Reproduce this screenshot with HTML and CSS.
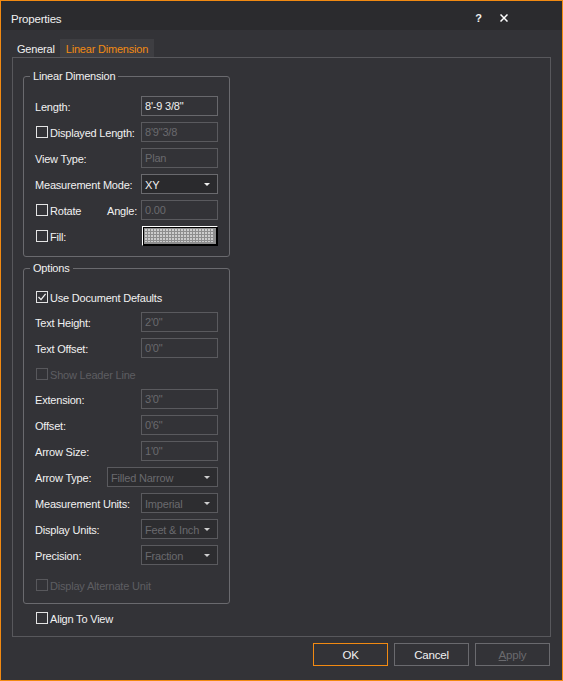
FILE: index.html
```html
<!DOCTYPE html>
<html>
<head>
<meta charset="utf-8">
<link rel="stylesheet" href="styles.css">
</head>
<body>
<div class="window">
  <div class="titlebar">
    <span class="title">Properties</span>
    <span class="tb-btn help">?</span>
    <span class="tb-btn close"><svg width="8" height="8" viewBox="0 0 8 8"><path d="M0.5 0.5 L7.5 7.5 M7.5 0.5 L0.5 7.5" stroke="#ffffff" stroke-width="1.5" fill="none"/></svg></span>
  </div>
  <div class="tabs">
    <span class="tab">General</span>
    <span class="tab active">Linear Dimension</span>
  </div>
  <div class="panel">
    <div class="group g1">
      <div class="legend">Linear Dimension</div>
      <div class="rows">
        <div class="row"><span class="label">Length:</span><span class="field input">8'-9 3/8"</span></div>
        <div class="row"><span class="cb"></span><span class="label">Displayed Length:</span><span class="field input disabled">8'9"3/8</span></div>
        <div class="row"><span class="label">View Type:</span><span class="field input disabled">Plan</span></div>
        <div class="row"><span class="label">Measurement Mode:</span><span class="field select"><span class="val">XY</span><span class="arrow"></span></span></div>
        <div class="row"><span class="cb"></span><span class="label">Rotate</span><span class="label right">Angle:</span><span class="field input disabled">0.00</span></div>
        <div class="row"><span class="cb"></span><span class="label">Fill:</span><span class="field swatch"><span class="grid"></span></span></div>
      </div>
    </div>
    <div class="group g2">
      <div class="legend">Options</div>
      <div class="rows">
        <div class="row short"><span class="cb checked"><svg width="10" height="10" viewBox="0 0 10 10"><path d="M1.5 5 L4 7.6 L8.6 1.8" stroke="#f1f1f1" stroke-width="1.3" fill="none"/></svg></span><span class="label">Use Document Defaults</span></div>
        <div class="row"><span class="label">Text Height:</span><span class="field input disabled">2'0"</span></div>
        <div class="row"><span class="label">Text Offset:</span><span class="field input disabled">0'0"</span></div>
        <div class="row short"><span class="cb off"></span><span class="label dim">Show Leader Line</span></div>
        <div class="row"><span class="label">Extension:</span><span class="field input disabled">3'0"</span></div>
        <div class="row"><span class="label">Offset:</span><span class="field input disabled">0'6"</span></div>
        <div class="row"><span class="label">Arrow Size:</span><span class="field input disabled">1'0"</span></div>
        <div class="row"><span class="label">Arrow Type:</span><span class="field select wide disabled"><span class="val">Filled Narrow</span><span class="arrow"></span></span></div>
        <div class="row"><span class="label">Measurement Units:</span><span class="field select disabled"><span class="val">Imperial</span><span class="arrow"></span></span></div>
        <div class="row"><span class="label">Display Units:</span><span class="field select disabled"><span class="val">Feet &amp; Inch</span><span class="arrow"></span></span></div>
        <div class="row"><span class="label">Precision:</span><span class="field select disabled"><span class="val">Fraction</span><span class="arrow"></span></span></div>
        <div class="row alt"><span class="cb off"></span><span class="label dim">Display Alternate Unit</span></div>
      </div>
    </div>
    <div class="row align"><span class="cb"></span><span class="label">Align To View</span></div>
  </div>
  <div class="buttons">
    <span class="btn default">OK</span>
    <span class="btn">Cancel</span>
    <span class="btn disabled"><u>A</u>pply</span>
  </div>
</div>
</body>
</html>
```
FILE: styles.css
```css
html, body {
  margin: 0;
  padding: 0;
  background: #333337;
}
body {
  width: 563px;
  height: 681px;
  overflow: hidden;
  font-family: "Liberation Sans", Arial, sans-serif;
  font-size: 11px;
  letter-spacing: -0.2px;
  color: #f1f1f1;
}
.window {
  box-sizing: border-box;
  width: 563px;
  height: 681px;
  border: 1px solid #f28a12;
  background: #333337;
  display: flex;
  flex-direction: column;
}
.titlebar {
  height: 29px;
  background: #2b2b2e;
  display: flex;
  align-items: center;
  padding: 0 46px 0 10px;
}
.title {
  flex: 1;
  font-size: 11.5px;
  line-height: 14px;
  padding-top: 6px;
}
.tb-btn {
  width: 25px;
  display: flex;
  justify-content: center;
  align-items: center;
  height: 29px;
  padding-top: 4px;
  box-sizing: border-box;
}
.help {
  font-weight: bold;
  font-size: 11px;
}
.tabs {
  display: flex;
  margin: 9px 0 0 11px;
  height: 18px;
}
.tab {
  line-height: 18px;
  padding: 1px 6px 0 5px;
}
.tab.active {
  background: #3e3e42;
  color: #f28a12;
  padding-left: 6px;
  margin-left: -1px;
}
.panel {
  box-sizing: border-box;
  margin-left: 11px;
  width: 539px;
  height: 580px;
  border: 1px solid #58585c;
  padding: 18px 0 0 10px;
}
.group {
  width: 207px;
  box-sizing: border-box;
  border: 1px solid #6a6a6e;
  border-radius: 3px;
  padding: 0 11px 10px 11px;
}
.g2 {
  margin-top: 11px;
  padding-bottom: 8px;
}
.legend {
  width: max-content;
  margin: -8px 0 0 -5px;
  padding: 0 3px;
  background: #333337;
  line-height: 14px;
}
.rows {
  display: flex;
  flex-direction: column;
  gap: 6px;
  margin-top: 13px;
}
.g2 .rows {
  margin-top: 12px;
}
.row {
  display: flex;
  align-items: center;
  height: 20px;
}
.row.short {
  height: 19px;
}
.row.alt {
  margin-top: 4px;
}
.row.align {
  margin: 4px 0 0 12px;
}
.label {
  flex: 1;
  line-height: 14px;
  padding-top: 2px;
  white-space: nowrap;
}
.label.right {
  flex: none;
  margin-right: 4px;
}
.label.dim {
  color: #5e5e62;
}
.cb {
  flex: none;
  box-sizing: border-box;
  width: 12px;
  height: 12px;
  border: 1px solid #e4e4e4;
  margin: 0 2px 0 1px;
  display: flex;
  align-items: center;
  justify-content: center;
}
.cb.off {
  border-color: #58585c;
}
.field {
  flex: none;
  box-sizing: border-box;
  width: 77px;
  height: 20px;
  border: 1px solid #68686c;
  padding: 0 3px;
  line-height: 18px;
  white-space: nowrap;
  overflow: hidden;
}
.input.disabled {
  border-color: #5a5a5e;
  color: #6a6a6e;
}
.select {
  display: flex;
  align-items: center;
  background: #2a2a2d;
  border-color: #6a6a6e;
  padding-right: 7px;
}
.select.wide {
  width: 111px;
}
.select.disabled {
  border-color: #5a5a5e;
  color: #6a6a6e;
  background: #2d2d30;
}
.val {
  flex: 1;
  padding-top: 1px;
}
.arrow {
  width: 0;
  height: 0;
  border-left: 3px solid transparent;
  border-right: 3px solid transparent;
  border-top: 3px solid #f1f1f1;
}
.select.disabled .arrow {
  border-top-color: #cfcfcf;
}
.swatch {
  width: 76px;
  border: 1px solid #000000;
  border-top-color: #ffffff;
  border-left-color: #ffffff;
  background: #000000;
  padding: 1px;
  display: flex;
}
.grid {
  flex: 1;
  background-color: #8e8e8e;
  background-image: linear-gradient(#8e8e8e 1px, transparent 1px), linear-gradient(90deg, #8e8e8e 1px, #cdcdcd 1px);
  background-size: 3px 3px;
  border-right: 2px solid #8e8e8e;
  border-bottom: 2px solid #8e8e8e;
}
.buttons {
  display: flex;
  justify-content: flex-end;
  gap: 6px;
  margin: 6px 12px 0 0;
}
.btn {
  box-sizing: border-box;
  width: 75px;
  height: 23px;
  border: 1px solid #6a6a6e;
  text-align: center;
  line-height: 21px;
  padding-top: 1px;
  font-size: 11.5px;
}
.btn.default {
  border-color: #f28a12;
}
.btn.disabled {
  color: #6a6a6e;
}
```
